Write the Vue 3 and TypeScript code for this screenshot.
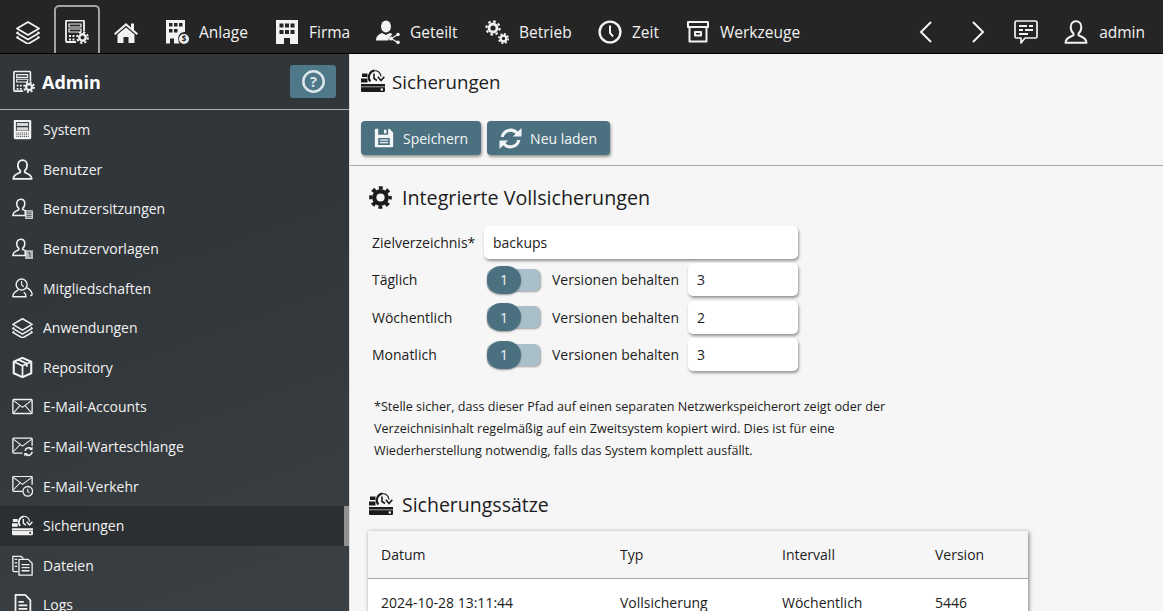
<template>
  <div class="app">
    <!-- icon sprite -->
    <svg class="sprite" aria-hidden="true">
      <symbol id="i-layers" viewBox="0 0 24 24">
        <path d="M12 2 23 8.500 12 15 1 8.500Z" fill="none" stroke="currentColor" stroke-width="1.800" stroke-linejoin="round" />
        <path d="M2.500 12 1 13 12 19.500 23 13l-1.500-1M2.500 16.500 1 17.500 12 24l11-6.500-1.500-1" fill="none" stroke="currentColor" stroke-width="1.800" stroke-linejoin="round" />
      </symbol>
      <symbol id="i-admin" viewBox="0 0 24 24">
        <path d="M11 22H2a1 1 0 0 1-1-1V1.500a1 1 0 0 1 1-1h16a1 1 0 0 1 1 1V11" fill="none" stroke="currentColor" stroke-width="1.800" />
        <path d="M4 4h12v3H4zM4 9h12v3H4z" fill="none" stroke="currentColor" stroke-width="1.200" />
        <path d="M4 15h2v2H4zM7.500 15h2v2h-2zM4 18.500h2v2H4zM7.500 18.500h2v2h-2z" fill="currentColor" />
        <circle cx="17.500" cy="17.500" r="3.200" fill="none" stroke="currentColor" stroke-width="2.400" />
        <circle cx="17.500" cy="17.500" r="5.400" fill="none" stroke="currentColor" stroke-width="2" stroke-dasharray="2.200 2.040" />
      </symbol>
      <symbol id="i-home" viewBox="0 0 24 24">
        <path d="M12 3 0 13.500l1.300 1.500L12 5.800 22.700 15l1.300-1.500-4-3.500V3.500h-3V7.500Z" fill="currentColor" />
        <path d="M3.500 14.500 12 7.500l8.500 7V23H14.500v-6h-5v6H3.500Z" fill="currentColor" />
      </symbol>
      <symbol id="i-plant" viewBox="0 0 24 24">
        <path d="M1 0h19v12a6.500 6.500 0 0 0-6.500 8.500c0 1 .3 2 .8 3H9v-5H5v5H1Z" fill="currentColor" />
        <path d="M4 3h3.500v3.500H4zM9 3h3.500v3.500H9zM14 3h3.500v3.500H14zM4 9h3.500v3.500H4zM9 9h3.500v3.500H9z" fill="#252525" />
        <circle cx="19" cy="19" r="5" fill="currentColor" />
        <text x="19" y="22" text-anchor="middle" font-size="8" font-weight="700" fill="#252525" font-family="'Open Sans', sans-serif">$</text>
      </symbol>
      <symbol id="i-building" viewBox="0 0 24 24">
        <path d="M1 0h22v24H15v-6H9v6H1Z" fill="currentColor" />
        <path d="M4.500 3.500h4v4h-4zM10 3.500h4v4h-4zM15.500 3.500h4v4h-4zM4.500 10h4v4h-4zM10 10h4v4h-4zM15.500 10h4v4h-4z" fill="#252525" />
      </symbol>
      <symbol id="i-shared" viewBox="0 0 24 24">
        <ellipse cx="10" cy="6.500" rx="5" ry="6" fill="currentColor" />
        <path d="M0 20.500c0-4.500 3-6.500 6-7.500l4 2 4-2c1 .3 1.800.7 2.500 1.300L13 17.500l-.5 3Z" fill="currentColor" />
        <path d="m15 18.500 7-4M15 18.500l7 4" stroke="currentColor" stroke-width="1.300" />
        <circle cx="15" cy="18.500" r="2" fill="currentColor" />
        <circle cx="22" cy="14.500" r="1.800" fill="currentColor" />
        <circle cx="22" cy="22.300" r="1.800" fill="currentColor" />
      </symbol>
      <symbol id="i-gears" viewBox="0 0 24 24">
        <circle cx="8" cy="8" r="4" fill="none" stroke="currentColor" stroke-width="2.800" />
        <circle cx="8" cy="8" r="6.600" fill="none" stroke="currentColor" stroke-width="2.200" stroke-dasharray="2.600 2.580" />
        <circle cx="18.500" cy="18.500" r="2.800" fill="none" stroke="currentColor" stroke-width="2.200" />
        <circle cx="18.500" cy="18.500" r="4.600" fill="none" stroke="currentColor" stroke-width="1.800" stroke-dasharray="1.900 1.710" />
      </symbol>
      <symbol id="i-clock" viewBox="0 0 24 24">
        <circle cx="12" cy="12" r="10.400" fill="none" stroke="currentColor" stroke-width="2.400" />
        <path d="M12 5.500V13l3 3.500" fill="none" stroke="currentColor" stroke-width="2" />
      </symbol>
      <symbol id="i-archive" viewBox="0 0 24 24">
        <path d="M2 2h20v5H2ZM3.500 7v14.500h17V7M9 12h6v3.500H9Z" fill="none" stroke="currentColor" stroke-width="2" stroke-linejoin="round" />
      </symbol>
      <symbol id="i-chat" viewBox="0 0 24 24">
        <path d="M2.500 1h19A1.500 1.500 0 0 1 23 2.500v14a1.500 1.500 0 0 1-1.500 1.500H11l-4 5v-5H2.500A1.500 1.500 0 0 1 1 16.500v-14A1.500 1.500 0 0 1 2.500 1Z" fill="none" stroke="currentColor" stroke-width="1.700" stroke-linejoin="round" />
        <path d="M5 5h8v2H5zM15 5h4v2h-4zM5 9h4v2H5zM11 9h8v2h-8zM5 13h9v2H5z" fill="currentColor" />
      </symbol>
      <symbol id="i-user" viewBox="0 0 24 24">
        <path d="M12 1.200c3.200 0 5.300 2.600 5.300 6 0 3-1.500 5.300-2.800 6.300v1.700c2 1.500 8 2 8 7.600H1.500c0-5.600 6-6.100 8-7.600v-1.700C8.200 12.500 6.700 10.200 6.700 7.200c0-3.400 2.100-6 5.300-6Z" fill="none" stroke="currentColor" stroke-width="2" stroke-linejoin="round" />
      </symbol>
      <symbol id="i-system" viewBox="0 0 24 24">
        <rect x="2" y="1" width="20" height="22" rx="1.500" fill="currentColor" />
        <path d="M4.500 3.500h15v10h-15z" fill="#33383c" />
        <path d="M5.500 4.500h13v3.500h-13zM5.500 9.500h13V13h-13z" fill="currentColor" opacity=".85" />
        <path d="M5 16h14M5 18h14M5 20h14" stroke="#33383c" stroke-width="1" stroke-dasharray="1.200 1" />
      </symbol>
      <symbol id="i-session" viewBox="0 0 24 24">
        <path d="M10 1.500c2.800 0 4.600 2.200 4.600 5 0 2.500-1.200 4.400-2.400 5.300v1.500c1 .5 2 .9 3 1.200V20H1c0-4.800 5.200-5.200 6.800-6.700v-1.500C6.600 10.900 5.400 9 5.400 6.500c0-2.800 1.800-5 4.600-5Z" fill="none" stroke="currentColor" stroke-width="1.800" stroke-linejoin="round" />
        <rect x="15" y="14" width="9" height="10" rx="1" fill="currentColor" opacity=".8" />
        <path d="M16.500 16h6M16.500 18h6M16.500 20h6M16.500 22h6" stroke="#33383c" stroke-width=".8" />
      </symbol>
      <symbol id="i-template" viewBox="0 0 24 24">
        <path d="M10 1.500c2.800 0 4.600 2.200 4.600 5 0 2.500-1.200 4.400-2.400 5.300v1.500c1 .5 2 .9 3 1.200V20H1c0-4.800 5.200-5.200 6.800-6.700v-1.500C6.600 10.900 5.400 9 5.400 6.500c0-2.800 1.800-5 4.600-5Z" fill="none" stroke="currentColor" stroke-width="1.800" stroke-linejoin="round" />
        <path d="M16 14h8v10h-9v-9Z" fill="currentColor" opacity=".7" />
        <path d="M18.500 17h2v5" fill="none" stroke="#33383c" stroke-width="1" />
      </symbol>
      <symbol id="i-member" viewBox="0 0 24 24">
        <circle cx="11" cy="7.500" r="6.300" fill="none" stroke="currentColor" stroke-width="1.600" />
        <path d="M11 3.500V8l2.500 2" fill="none" stroke="currentColor" stroke-width="1.200" />
        <path d="M7 13.500c-1 1.500-6 1.800-6 8h15c0-2.500-1-4-2.500-5.200M16 11c3 .5 7 4 7 8l-2 1.500" fill="none" stroke="currentColor" stroke-width="1.600" stroke-linejoin="round" />
      </symbol>
      <symbol id="i-box" viewBox="0 0 24 24">
        <path d="M12 1 22 5.500v13L12 23 2 18.500v-13Z" fill="none" stroke="currentColor" stroke-width="2.400" stroke-linejoin="round" />
        <path d="M2 5.500 12 10l10-4.500M12 10v13M7 3l10 4.500V11" fill="none" stroke="currentColor" stroke-width="2" />
      </symbol>
      <symbol id="i-mail" viewBox="0 0 24 24">
        <rect x="1" y="4" width="22" height="16" rx="1" fill="none" stroke="currentColor" stroke-width="1.500" />
        <path d="m1.500 5 10.500 8 10.500-8M1.500 19.500l7.500-8.500M22.500 19.500 15 11" fill="none" stroke="currentColor" stroke-width="1.200" />
      </symbol>
      <symbol id="i-mailq" viewBox="0 0 24 24">
        <path d="M12 19.500H2a1 1 0 0 1-1-1V3.500a1 1 0 0 1 1-1h20a1 1 0 0 1 1 1V11" fill="none" stroke="currentColor" stroke-width="1.500" />
        <path d="m1.500 3.500 10.500 8 10.500-8M1.500 18l7.500-8" fill="none" stroke="currentColor" stroke-width="1.200" />
        <path d="M15 17a4.200 4.200 0 0 1 7-2.500M23 18a4.200 4.200 0 0 1-7 3" fill="none" stroke="currentColor" stroke-width="1.800" />
        <path d="M23.500 12v4h-4ZM14 23.500v-4h4Z" fill="currentColor" />
      </symbol>
      <symbol id="i-mailt" viewBox="0 0 24 24">
        <path d="M12 17.500H2a1 1 0 0 1-1-1V1.500a1 1 0 0 1 1-1h20a1 1 0 0 1 1 1V10" fill="none" stroke="currentColor" stroke-width="1.500" />
        <path d="m1.500 1.500 10.500 8 10.500-8M1.500 16l7.500-8" fill="none" stroke="currentColor" stroke-width="1.200" />
        <circle cx="18" cy="17.500" r="5.500" fill="#33383c" stroke="currentColor" stroke-width="1.500" />
        <path d="M18 14.500v3.500l2 1.200" fill="none" stroke="currentColor" stroke-width="1.200" />
      </symbol>
      <symbol id="i-backup" viewBox="0 0 24 24">
        <path d="M1 4.500h5.500v3.500H1zM0 9.500h6.500v4H0z" fill="currentColor" />
        <path d="M13.500 1.500A6.800 6.800 0 0 0 9.300 12.500" fill="none" stroke="currentColor" stroke-width="2" />
        <path d="M13.500 1.500a7 7 0 0 1 6.500 6" fill="none" stroke="currentColor" stroke-width="1.200" />
        <path d="M13 4.500V9.500l3 2" fill="none" stroke="currentColor" stroke-width="1.600" />
        <path d="m16.800 7.800 3.200 3.700 3.300-3.700" fill="none" stroke="currentColor" stroke-width="1.600" />
        <path d="M0 15h24v6.800a1.200 1.200 0 0 1-1.200 1.200H1.200A1.200 1.200 0 0 1 0 21.800Z" fill="currentColor" />
        <path d="M0 17.800h24" stroke="var(--bk-dot, #33383c)" stroke-width=".6" />
        <circle cx="20.800" cy="20.500" r="1.200" fill="var(--bk-dot, #33383c)" />
      </symbol>
      <symbol id="i-files" viewBox="0 0 24 24">
        <path d="M7 19H2.500A1.500 1.500 0 0 1 1 17.500v-16h9.500L13 4" fill="none" stroke="currentColor" stroke-width="1.500" />
        <path d="M8 5h10.500L23 9.500V23H8Z" fill="#33383c" stroke="currentColor" stroke-width="1.500" stroke-linejoin="round" />
        <path d="M3 5h3M3 9h3M3 13h3M11 11h9M11 14.500h9M11 18h9" stroke="currentColor" stroke-width="1.500" />
      </symbol>
      <symbol id="i-logs" viewBox="0 0 24 24">
        <path d="M4 1h11l6 6v16H4Z" fill="none" stroke="currentColor" stroke-width="2" stroke-linejoin="round" />
        <path d="M7.500 9h6M7.500 13h10M7.500 17h10" stroke="currentColor" stroke-width="2" />
      </symbol>
      <symbol id="i-save" viewBox="0 0 24 24">
        <path d="M2.500 1H5v7h12V1h1.500L23 5.500v16a1.500 1.500 0 0 1-1.500 1.500h-19A1.500 1.500 0 0 1 1 21.500v-19A1.500 1.500 0 0 1 2.500 1Z" fill="currentColor" />
        <path d="M12 2h3v4.500h-3z" fill="currentColor" />
        <rect x="5" y="12" width="14" height="8.500" rx=".5" fill="#4b7080" />
        <path d="M7 14.500h10M7 17.500h10" stroke="currentColor" stroke-width="1.400" />
      </symbol>
      <symbol id="i-reload" viewBox="0 0 24 24">
        <path d="M3.300 10.500A9 9 0 0 1 19 6.500M20.700 13.500A9 9 0 0 1 5 17.500" fill="none" stroke="currentColor" stroke-width="3.200" />
        <path d="M23.500 1v9h-9ZM.5 23v-9h9Z" fill="currentColor" />
      </symbol>
      <symbol id="i-gear" viewBox="0 0 24 24">
        <circle cx="12" cy="12" r="6.500" fill="none" stroke="currentColor" stroke-width="4.400" />
        <circle cx="12" cy="12" r="10" fill="none" stroke="currentColor" stroke-width="3.600" stroke-dasharray="4.100 3.750" stroke-dashoffset="2" />
      </symbol>
    </svg>

    <header class="topbar">
      <svg class="top-icon layers"><use href="#i-layers" /></svg>
      <div class="tab-active"><svg class="top-icon"><use href="#i-admin" /></svg></div>
      <svg class="top-icon home"><use href="#i-home" /></svg>
      <nav class="top-nav">
        <a v-for="item in topItems" :key="item.label" class="top-link" :style="{ width: item.width + 'px' }">
          <svg class="top-icon"><use :href="'#i-' + item.icon" /></svg>
          <span>{{ item.label }}</span>
        </a>
      </nav>
      <div class="top-right">
        <svg class="chevron" viewBox="0 0 14 24"><path d="M12 2 2 12l10 10" /></svg>
        <svg class="chevron" viewBox="0 0 14 24"><path d="m2 2 10 10L2 22" /></svg>
        <svg class="top-icon chat"><use href="#i-chat" /></svg>
        <a class="top-user">
          <svg class="top-icon"><use href="#i-user" /></svg>
          <span>admin</span>
        </a>
      </div>
    </header>

    <div class="body">
      <aside class="sidebar">
        <div class="side-head">
          <svg class="side-icon"><use href="#i-admin" /></svg>
          <strong>Admin</strong>
          <button class="help" aria-label="Hilfe">
            <svg viewBox="0 0 24 24" width="25" height="25">
              <circle cx="12" cy="12" r="9.800" fill="none" stroke="currentColor" stroke-width="2.400" />
              <text x="12" y="17" text-anchor="middle" font-size="14" font-weight="700" fill="currentColor" font-family="'Open Sans', sans-serif">?</text>
            </svg>
          </button>
        </div>
        <ul class="menu">
          <li v-for="item in menu" :key="item.label" :class="{ active: item.label === 'Sicherungen' }">
            <svg class="side-icon"><use :href="'#i-' + item.icon" /></svg>
            <span>{{ item.label }}</span>
          </li>
        </ul>
      </aside>

      <main class="content">
        <div class="page-title">
          <svg class="title-icon"><use href="#i-backup" /></svg>
          <h1>Sicherungen</h1>
        </div>
        <div class="toolbar">
          <button class="btn">
            <svg class="btn-icon"><use href="#i-save" /></svg>
            Speichern
          </button>
          <button class="btn">
            <svg class="btn-icon reload"><use href="#i-reload" /></svg>
            Neu laden
          </button>
        </div>

        <section class="section">
          <h2 class="full-head">
            <svg class="gear"><use href="#i-gear" /></svg>
            Integrierte Vollsicherungen
          </h2>
          <div class="form-row first">
            <label class="lbl">Zielverzeichnis*</label>
            <div class="field wide">backups</div>
          </div>
          <div v-for="s in schedules" :key="s.label" class="form-row">
            <label class="lbl">{{ s.label }}</label>
            <div class="toggle"><span class="knob">1</span></div>
            <span class="keep">Versionen behalten</span>
            <div class="field small">{{ s.keep }}</div>
          </div>
          <p class="note">
            *Stelle sicher, dass dieser Pfad auf einen separaten Netzwerkspeicherort zeigt oder der<br />
            Verzeichnisinhalt regelmäßig auf ein Zweitsystem kopiert wird. Dies ist für eine<br />
            Wiederherstellung notwendig, falls das System komplett ausfällt.
          </p>

          <h2 class="set-head">
            <svg class="title-icon"><use href="#i-backup" /></svg>
            Sicherungssätze
          </h2>
          <table class="sets">
            <colgroup>
              <col style="width: 239px" />
              <col style="width: 162px" />
              <col style="width: 153px" />
              <col />
            </colgroup>
            <thead>
              <tr><th>Datum</th><th>Typ</th><th>Intervall</th><th>Version</th></tr>
            </thead>
            <tbody>
              <tr v-for="r in rows" :key="r.date">
                <td>{{ r.date }}</td><td>{{ r.type }}</td><td>{{ r.interval }}</td><td>{{ r.version }}</td>
              </tr>
            </tbody>
          </table>
        </section>
      </main>
    </div>
  </div>
</template>

<script setup lang="ts">
interface TopItem {
  label: string
  icon: string
  width: number
}

const topItems: TopItem[] = [
  { label: 'Anlage', icon: 'plant', width: 110 },
  { label: 'Firma', icon: 'building', width: 101 },
  { label: 'Geteilt', icon: 'shared', width: 109 },
  { label: 'Betrieb', icon: 'gears', width: 113 },
  { label: 'Zeit', icon: 'clock', width: 88 },
  { label: 'Werkzeuge', icon: 'archive', width: 120 },
]

const menu = [
  { label: 'System', icon: 'system' },
  { label: 'Benutzer', icon: 'user' },
  { label: 'Benutzersitzungen', icon: 'session' },
  { label: 'Benutzervorlagen', icon: 'template' },
  { label: 'Mitgliedschaften', icon: 'member' },
  { label: 'Anwendungen', icon: 'layers' },
  { label: 'Repository', icon: 'box' },
  { label: 'E-Mail-Accounts', icon: 'mail' },
  { label: 'E-Mail-Warteschlange', icon: 'mailq' },
  { label: 'E-Mail-Verkehr', icon: 'mailt' },
  { label: 'Sicherungen', icon: 'backup' },
  { label: 'Dateien', icon: 'files' },
  { label: 'Logs', icon: 'logs' },
]

const schedules = [
  { label: 'Täglich', keep: 3 },
  { label: 'Wöchentlich', keep: 2 },
  { label: 'Monatlich', keep: 3 },
]

const rows = [
  { date: '2024-10-28 13:11:44', type: 'Vollsicherung', interval: 'Wöchentlich', version: 5446 },
]
</script>

<style>
html,
body {
  margin: 0;
  height: 100%;
  overflow: hidden;
}
</style>

<style scoped>
.app {
  height: 611px;
  overflow: hidden;
  font-family: 'Open Sans', 'Noto Sans', sans-serif;
  color: #1c1c1c;
  background: #f6f6f6;
}

.sprite {
  display: none;
}

/* ===== top bar ===== */
.topbar {
  box-sizing: border-box;
  height: 54px;
  display: flex;
  align-items: flex-end;
  background: #252525;
  border-bottom: 1px solid #000;
  color: #f2f2f2;
}

.top-icon {
  width: 24px;
  height: 24px;
  flex: none;
}

.layers {
  margin: 0 14px 9px 16px;
}

.tab-active {
  box-sizing: border-box;
  width: 46px;
  height: 48px;
  display: flex;
  align-items: center;
  justify-content: center;
  padding-top: 3px;
  border: 2px solid #a3a3a3;
  border-bottom: none;
  border-radius: 5px 5px 0 0;
}

.home {
  margin: 0 0 9px 14px;
}

.top-nav {
  display: flex;
  margin-left: 27px;
  margin-bottom: 6px;
}

.top-link {
  display: flex;
  align-items: center;
  gap: 10px;
  height: 30px;
  font-size: 15.500px;
}

.top-right {
  display: flex;
  align-items: center;
  margin-left: auto;
  margin-bottom: 6px;
  height: 30px;
}

.chevron {
  width: 14px;
  height: 24px;
  margin-right: 38px;
  fill: none;
  stroke: #f2f2f2;
  stroke-width: 2;
}

.chat {
  margin-left: -9px;
  margin-right: 26px;
}

.top-user {
  display: flex;
  align-items: center;
  gap: 11px;
  font-size: 15.500px;
  margin-right: 18px;
}

/* ===== sidebar ===== */
.body {
  display: flex;
  height: 557px;
}

.sidebar {
  position: relative;
  width: 349px;
  flex: none;
  overflow: hidden;
  color: #f2f2f2;
  background: linear-gradient(160deg, #31363a 40%, #3a4043 100%);
  border-right: 1px solid #dcdcdc;
}

.side-head {
  box-sizing: border-box;
  height: 56px;
  display: flex;
  align-items: center;
  padding: 0 13px;
  border-bottom: 1px solid #a9abac;
}

.side-icon {
  width: 21px;
  height: 21px;
  flex: none;
}

.side-head .side-icon {
  width: 22px;
  height: 24px;
}

.side-head strong {
  margin-left: 7px;
  font-size: 18px;
  font-weight: 700;
  color: #fff;
}

.help {
  display: flex;
  align-items: center;
  justify-content: center;
  width: 46px;
  height: 33px;
  margin-left: auto;
  padding: 0;
  border: none;
  border-radius: 3px;
  background: #4f7888;
  color: #dde6ea;
}

.menu {
  list-style: none;
  margin: 0;
  padding: 0;
}

.menu li {
  box-sizing: border-box;
  height: 39.6px;
  display: flex;
  align-items: center;
  gap: 10px;
  padding-left: 12px;
  font-size: 14px;
  --bk-dot: #33383c;
}

.menu li.active {
  background: #2b2f32;
  box-shadow: inset -5px 0 0 #8f9192;
  --bk-dot: #2b2f32;
}

/* ===== content ===== */
.content {
  flex: 1;
  min-width: 0;
  overflow: hidden;
  --bk-dot: #f6f6f6;
}

.page-title {
  box-sizing: border-box;
  display: flex;
  align-items: center;
  gap: 7px;
  height: 56px;
  padding: 0 0 2px 11px;
}

.title-icon {
  width: 24px;
  height: 24px;
  flex: none;
  color: #1a1a1a;
}

h1 {
  margin: 0;
  font-size: 18.700px;
  font-weight: 400;
}

.toolbar {
  display: flex;
  gap: 6px;
  height: 56px;
  padding-left: 11px;
  border-bottom: 1px solid #a8a8a8;
  box-sizing: border-box;
  padding-top: 11px;
}

.btn {
  display: flex;
  align-items: center;
  gap: 9px;
  height: 34px;
  padding: 0 13px;
  border: none;
  border-radius: 4px;
  background: #4b7080;
  color: #f2f5f6;
  font: inherit;
  font-size: 14px;
  font-weight: 500;
  box-shadow: 1px 2px 3px rgba(0, 0, 0, 0.4);
}

.btn-icon {
  width: 20px;
  height: 20px;
}

.btn-icon.reload {
  width: 23px;
  height: 23px;
  margin-left: -1px;
  margin-right: -1px;
}

.section {
  padding: 0 18px;
}

h2 {
  display: flex;
  align-items: center;
  margin: 0;
  font-size: 19.700px;
  font-weight: 400;
}

.full-head {
  box-sizing: border-box;
  gap: 10px;
  height: 59px;
  padding: 3px 0 0 1px;
}

.gear {
  width: 23px;
  height: 23px;
}

.form-row {
  display: flex;
  align-items: center;
  height: 33px;
  margin-bottom: 4.600px;
  font-size: 14px;
  padding-left: 4px;
}

.form-row.first {
  margin-top: 1px;
  margin-bottom: 4px;
}

.lbl {
  width: 112px;
  flex: none;
}

.field {
  box-sizing: border-box;
  height: 33px;
  display: flex;
  align-items: center;
  padding-left: 9px;
  border-radius: 5px;
  background: #fff;
  box-shadow: 1px 2px 3px rgba(0, 0, 0, 0.4);
}

.field.wide {
  width: 314px;
}

.field.small {
  width: 110px;
  margin-left: 9px;
}

.toggle {
  position: relative;
  width: 53px;
  height: 22px;
  margin-left: 3px;
  flex: none;
  border-radius: 6px;
  background: #a9bfc9;
  box-shadow: 1px 1px 2px rgba(0, 0, 0, 0.35);
}

.knob {
  position: absolute;
  left: 0;
  top: -3px;
  width: 34px;
  height: 28px;
  display: flex;
  align-items: center;
  justify-content: center;
  border-radius: 14px;
  background: #4b7080;
  color: #f0f4f5;
  box-shadow: 0 1px 2px rgba(0, 0, 0, 0.4);
}

.keep {
  margin-left: 12px;
  white-space: nowrap;
}

.note {
  margin: 25px 0 0 6px;
  font-size: 12.600px;
  line-height: 22px;
}

.set-head {
  gap: 9px;
  height: 44px;
  margin-top: 20px;
  padding-left: 1px;
  font-size: 19.500px;
}

.sets {
  width: 660px;
  margin-top: 5px;
  table-layout: fixed;
  border-collapse: collapse;
  font-size: 14px;
  background: #fff;
  box-shadow: 1px 1px 4px rgba(0, 0, 0, 0.5);
}

.sets th {
  height: 47px;
  padding: 0 0 0 13px;
  text-align: left;
  font-weight: 400;
  background: #f6f6f6;
  border-bottom: 1px solid #a8a8a8;
}

.sets td {
  height: 47px;
  padding: 0 0 0 13px;
}
</style>
